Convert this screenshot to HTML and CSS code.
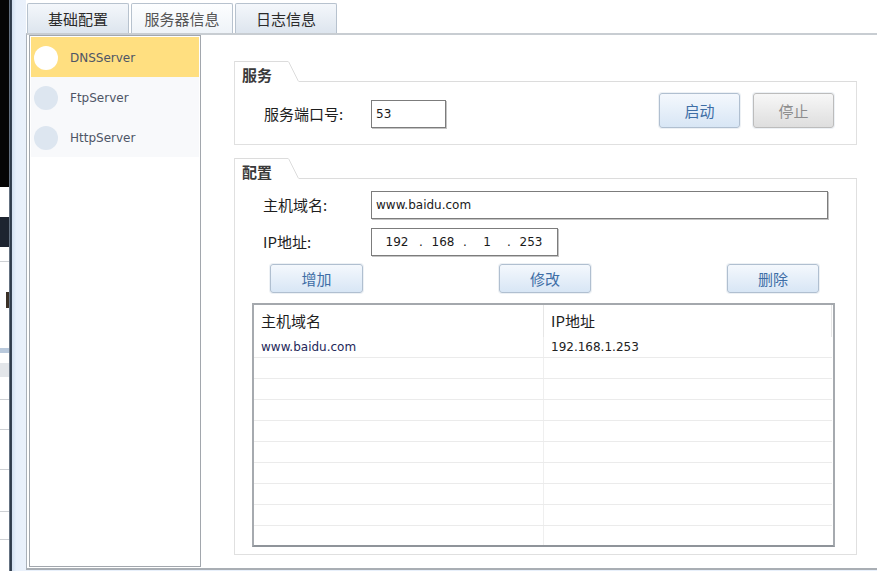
FILE: index.html
```html
<!DOCTYPE html>
<html>
<head>
	<meta charset="utf-8">
	<title>服务器信息</title>
	<link rel="stylesheet" href="styles.css">
</head>
<body>
	<div class="screen">
		<!-- 左侧露出的桌面 -->
		<div class="desk">
			<div class="desk-black"></div>
			<div class="desk-tab"></div>
			<div class="desk-rule first"></div>
			<div class="desk-glyph"></div>
			<div class="desk-band"></div>
			<div class="desk-icon"></div>
			<div class="desk-rule r2"></div>
			<div class="desk-rule r3"></div>
			<div class="desk-rule r4"></div>
			<div class="desk-rule r5"></div>
			<div class="desk-rule r6"></div>
		</div>
		<div class="frame-edge"></div>
		<div class="frame-side"></div>

		<div class="window">
			<div class="tabs">
				<div class="tab">基础配置</div>
				<div class="tab active">服务器信息</div>
				<div class="tab">日志信息</div>
			</div>

			<div class="panel">
				<div class="server-list">
					<div class="item selected"><span class="dot"></span>DNSServer</div>
					<div class="item"><span class="dot"></span>FtpServer</div>
					<div class="item"><span class="dot"></span>HttpServer</div>
				</div>

				<div class="content">
					<!-- 服务 -->
					<div class="group">
						<div class="group-head">
							<div class="group-title">服务</div>
							<svg class="group-slant" width="11" height="21" viewBox="0 0 11 21">
								<path d="M0.5 0.5 L10.5 20.5" stroke="#dcdcdc" stroke-width="1" fill="none"/>
							</svg>
							<div class="group-line"></div>
						</div>
						<div class="group-body service-body">
							<label class="field-label">服务端口号:</label>
							<input type="text" class="text-input port" value="53">
							<div class="actions">
								<button class="btn">启动</button>
								<button class="btn btn-off">停止</button>
							</div>
						</div>
					</div>

					<!-- 配置 -->
					<div class="group config">
						<div class="group-head">
							<div class="group-title">配置</div>
							<svg class="group-slant" width="11" height="21" viewBox="0 0 11 21">
								<path d="M0.5 0.5 L10.5 20.5" stroke="#dcdcdc" stroke-width="1" fill="none"/>
							</svg>
							<div class="group-line"></div>
						</div>
						<div class="group-body config-body">
							<div class="form-row">
								<label class="field-label">主机域名:</label>
								<input type="text" class="text-input host" value="www.baidu.com">
							</div>
							<div class="form-row">
								<label class="field-label">IP地址:</label>
								<div class="ip-input">
									<span class="seg first">192</span><span class="ip-dot">.</span>
									<span class="seg">168</span><span class="ip-dot">.</span>
									<span class="seg">1</span><span class="ip-dot">.</span>
									<span class="seg">253</span>
								</div>
							</div>
							<div class="btn-row">
								<button class="btn wide">增加</button>
								<button class="btn">修改</button>
								<button class="btn">删除</button>
							</div>

							<div class="grid">
								<div class="grid-head">
									<div class="cell c-host">主机域名</div>
									<div class="cell c-ip">IP地址</div>
								</div>
								<div class="grid-row">
									<div class="cell c-host host-text">www.baidu.com</div>
									<div class="cell c-ip ip-text">192.168.1.253</div>
								</div>
								<div class="grid-row"><div class="cell c-host"></div><div class="cell c-ip"></div></div>
								<div class="grid-row"><div class="cell c-host"></div><div class="cell c-ip"></div></div>
								<div class="grid-row"><div class="cell c-host"></div><div class="cell c-ip"></div></div>
								<div class="grid-row"><div class="cell c-host"></div><div class="cell c-ip"></div></div>
								<div class="grid-row"><div class="cell c-host"></div><div class="cell c-ip"></div></div>
								<div class="grid-row"><div class="cell c-host"></div><div class="cell c-ip"></div></div>
								<div class="grid-row"><div class="cell c-host"></div><div class="cell c-ip"></div></div>
								<div class="grid-row"><div class="cell c-host"></div><div class="cell c-ip"></div></div>
								<div class="grid-row"><div class="cell c-host"></div><div class="cell c-ip"></div></div>
							</div>
						</div>
					</div>
				</div>
			</div>
		</div>
	</div>
</body>
</html>
```

FILE: styles.css
```css
html, body{
	margin: 0;
	padding: 0;
}
body{
	width: 877px;
	height: 571px;
	overflow: hidden;
	background: #fff;
	font-family: "DejaVu Sans", "Noto Sans CJK SC", sans-serif;
	font-size: 12px;
	color: #222;
}
.screen{
	display: flex;
	height: 571px;
}

/* 桌面残影 */
.desk{
	width: 9px;
	flex: none;
	background: #fff;
	display: flex;
	flex-direction: column;
}
.desk-black{
	height: 187px;
	background: #050505;
}
.desk-tab{
	height: 30px;
	margin-top: 30px;
	background: #1d2430;
}
.desk-rule{
	height: 1px;
	background: #cdd0d4;
}
.desk-rule.first{ margin-top: 14px; }
.desk-glyph{
	width: 3px;
	height: 16px;
	margin: 30px 0 0 6px;
	background: #3a3026;
}
.desk-band{
	height: 5px;
	margin-top: 40px;
	background: #b9c9dc;
}
.desk-icon{
	height: 14px;
	margin-top: 10px;
	background: #e3e6ea;
}
.desk-rule.r2{ margin-top: 22px; }
.desk-rule.r3{ margin-top: 29px; }
.desk-rule.r4{ margin-top: 39px; }
.desk-rule.r5{ margin-top: 41px; }
.desk-rule.r6{ margin-top: 27px; }

.frame-edge{
	width: 3px;
	flex: none;
	background: linear-gradient(90deg, #8391a2, #2f3b4a 45%, #3b4758);
}
.frame-side{
	width: 14px;
	flex: none;
	background: linear-gradient(90deg, #d3e0f0, #e8f0fb 30%, #eaf1fb);
}

/* 窗口 */
.window{
	flex: 1;
	display: flex;
	flex-direction: column;
	background: #e8f0fb;
}
.tabs{
	display: flex;
	gap: 2px;
	height: 33px;
	box-sizing: border-box;
	padding: 3px 0 0 1px;
	background: #fff;
}
.tab{
	width: 102px;
	height: 30px;
	box-sizing: border-box;
	border: 1px solid #b7c2ce;
	border-bottom: none;
	border-radius: 2px 2px 0 0;
	background: linear-gradient(#f4f7fb, #dde5ee);
	text-align: center;
	line-height: 29px;
	font-family: "Noto Sans CJK SC", sans-serif;
	font-size: 15px;
	color: #2a2a2a;
}
.tab.active{
	background: linear-gradient(#fdfeff, #eef3f8);
	color: #555;
}

.panel{
	display: flex;
	align-items: flex-start;
	height: 537px;
	box-sizing: border-box;
	border-top: 2px solid #c8cdd2;
	border-left: 1px solid #aab1b9;
	border-bottom: 2px solid #a9aeb4;
	padding-left: 2px;
	background: #fff;
}

/* 服务器列表 */
.server-list{
	width: 172px;
	height: 532px;
	flex: none;
	box-sizing: border-box;
	border: 1px solid #a2a7ad;
	padding: 1px;
}
.item{
	height: 40px;
	display: flex;
	align-items: center;
	gap: 12px;
	padding: 1px 0 0 3px;
	box-sizing: border-box;
	background: #f8f9fb;
	color: #4e5566;
	font-size: 12px;
}
.item.selected{
	background: #ffdf80;
}
.dot{
	width: 24px;
	height: 24px;
	border-radius: 50%;
	background: #dde6f0;
}
.selected .dot{
	background: #fff;
}

/* 右侧内容 */
.content{
	flex: 1;
	padding: 26px 0 0 33px;
}
.group{
	width: 623px;
	box-sizing: border-box;
	border-left: 1px solid #e0e0e0;
	border-bottom: 1px solid #e0e0e0;
}
.group.config{
	margin-top: 13px;
}
.group-head{
	display: flex;
	height: 21px;
}
.group-title{
	width: 53px;
	height: 21px;
	box-sizing: border-box;
	border-top: 1px solid #dcdcdc;
	padding: 5px 0 0 7px;
	line-height: 15px;
	font-family: "Noto Sans CJK SC", sans-serif;
	font-size: 15px;
	font-weight: bold;
	color: #3a3a3a;
}
.group-slant{
	flex: none;
	display: block;
}
.group-line{
	flex: 1;
	border-bottom: 1px solid #dcdcdc;
}
.group-body{
	border-right: 1px solid #e0e0e0;
}
.service-body{
	height: 62px;
	box-sizing: border-box;
	display: flex;
	align-items: flex-end;
	padding: 0 22px 16px 29px;
}
.field-label{
	width: 107px;
	flex: none;
	line-height: 28px;
	font-family: "Noto Sans CJK SC", sans-serif;
	font-size: 15px;
	color: #1e1e1e;
}
.text-input{
	height: 28px;
	box-sizing: border-box;
	margin: 0;
	border: 1px solid #7c7c7c;
	box-shadow: 1px 1px 0 #c4c4c4;
	padding: 0 0 0 4px;
	font-family: "DejaVu Sans", sans-serif;
	font-size: 12px;
	color: #1a1a1a;
	outline: none;
}
.port{ width: 75px; }
.host{ width: 457px; }
.actions{
	margin-left: auto;
	display: flex;
	gap: 13px;
}
.btn{
	width: 81px;
	height: 35px;
	box-sizing: border-box;
	margin: 0;
	padding: 0;
	border: 1px solid #b0bfd0;
	border-radius: 3px;
	box-shadow: 0 0 0 1px #edf1f5;
	background: linear-gradient(#f4f8fd, #d8e6f5);
	font-family: "Noto Sans CJK SC", sans-serif;
	font-size: 15px;
	color: #3e6ea6;
}
.btn-off{
	border-color: #bcbcbc;
	background: linear-gradient(#f7f7f7, #dedede);
	color: #8d8d8d;
}

.config-body{
	padding: 12px 0 7px 0;
}
.form-row{
	display: flex;
	padding-left: 28px;
	margin-bottom: 9px;
}
.form-row .field-label{
	width: 108px;
}
.ip-input{
	width: 187px;
	height: 28px;
	box-sizing: border-box;
	display: flex;
	border: 1px solid #7c7c7c;
	box-shadow: 1px 1px 0 #c4c4c4;
	padding-left: 3px;
	line-height: 26px;
	color: #1a1a1a;
}
.seg{
	width: 40px;
	text-align: center;
}
.seg.first{ width: 44px; }
.ip-dot{
	width: 4px;
	text-align: center;
}
.btn-row{
	display: flex;
	justify-content: space-between;
	margin: -1px 37px 0 35px;
}
.btn-row .btn{
	width: 92px;
	height: 29px;
}
.btn-row .btn.wide{ width: 93px; }

/* 表格 */
.grid{
	width: 583px;
	height: 244px;
	box-sizing: border-box;
	margin: 10px 0 0 17px;
	border: 2px solid;
	border-color: #a4a8ad #a6aaaf #8f949a #a6aaaf;
	overflow: hidden;
}
.grid-head{
	display: flex;
	height: 32px;
	width: 578px;
}
.grid-head .cell{
	line-height: 32px;
	font-family: "Noto Sans CJK SC", sans-serif;
	font-size: 15px;
	color: #1e1e1e;
	border-right: 1px solid #e6e6e6;
}
.cell{
	box-sizing: border-box;
	padding-left: 7px;
}
.c-host{
	width: 290px;
	border-right: 1px solid #efefef;
}
.c-ip{
	width: 288px;
}
.grid-row{
	display: flex;
	width: 578px;
	height: 21px;
	box-sizing: border-box;
	border-bottom: 1px solid #ebebeb;
	line-height: 20px;
}
.host-text{
	color: #24285a;
}
.ip-text{
	color: #222;
}
```
